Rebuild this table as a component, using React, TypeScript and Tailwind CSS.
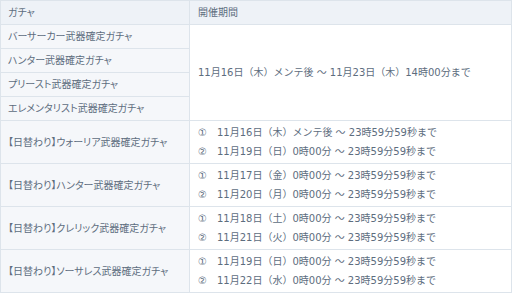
import React from "react";

const single = [
  "バーサーカー武器確定ガチャ",
  "ハンター武器確定ガチャ",
  "プリースト武器確定ガチャ",
  "エレメンタリスト武器確定ガチャ",
];

const doubles: [string, string, string][] = [
  ["【日替わり】ウォーリア武器確定ガチャ", "①　11月16日（木）メンテ後 ～ 23時59分59秒まで", "②　11月19日（日）0時00分 ～ 23時59分59秒まで"],
  ["【日替わり】ハンター武器確定ガチャ", "①　11月17日（金）0時00分 ～ 23時59分59秒まで", "②　11月20日（月）0時00分 ～ 23時59分59秒まで"],
  ["【日替わり】クレリック武器確定ガチャ", "①　11月18日（土）0時00分 ～ 23時59分59秒まで", "②　11月21日（火）0時00分 ～ 23時59分59秒まで"],
  ["【日替わり】ソーサレス武器確定ガチャ", "①　11月19日（日）0時00分 ～ 23時59分59秒まで", "②　11月22日（水）0時00分 ～ 23時59分59秒まで"],
];

const left = "border border-[#dde4eb] bg-[#f5f7fa] pl-[7px] pr-0 align-middle whitespace-nowrap [font-feature-settings:'palt']";
const right = "border border-[#dde4eb] bg-white pl-[8px] pr-0 align-middle whitespace-pre";

export default function App() {
  return (
    <div
      className="w-[512px] h-[293px] bg-white text-[10px] text-[#5d6d7e]"
      style={{ fontFamily: '"DejaVu Sans", "Noto Sans CJK JP", sans-serif' }}
    >
      <table className="w-[512px] border-collapse border border-[#c9d3dd] table-fixed">
        <colgroup>
          <col className="w-[189px]" />
          <col />
        </colgroup>
        <tbody>
          <tr className="h-[24px] bg-[#eef2f7]">
            <td className="border border-[#dde4eb] pl-[7px] align-middle [font-feature-settings:'palt']">ガチャ</td>
            <td className="border border-[#dde4eb] pl-[8px] align-middle">開催期間</td>
          </tr>
          {single.map((s, i) => (
            <tr key={s} className="h-[24px]">
              <td className={left}>{s}</td>
              {i === 0 && (
                <td rowSpan={4} className={right}>
                  11月16日（木）メンテ後 ～ 11月23日（木）14時00分まで
                </td>
              )}
            </tr>
          ))}
          {doubles.map(([n, a, b]) => (
            <tr key={n} className="h-[43px]">
              <td className={left}>{n}</td>
              <td className={right + " leading-[19px]"}>
                <div>{a}</div>
                <div>{b}</div>
              </td>
            </tr>
          ))}
        </tbody>
      </table>
    </div>
  );
}
